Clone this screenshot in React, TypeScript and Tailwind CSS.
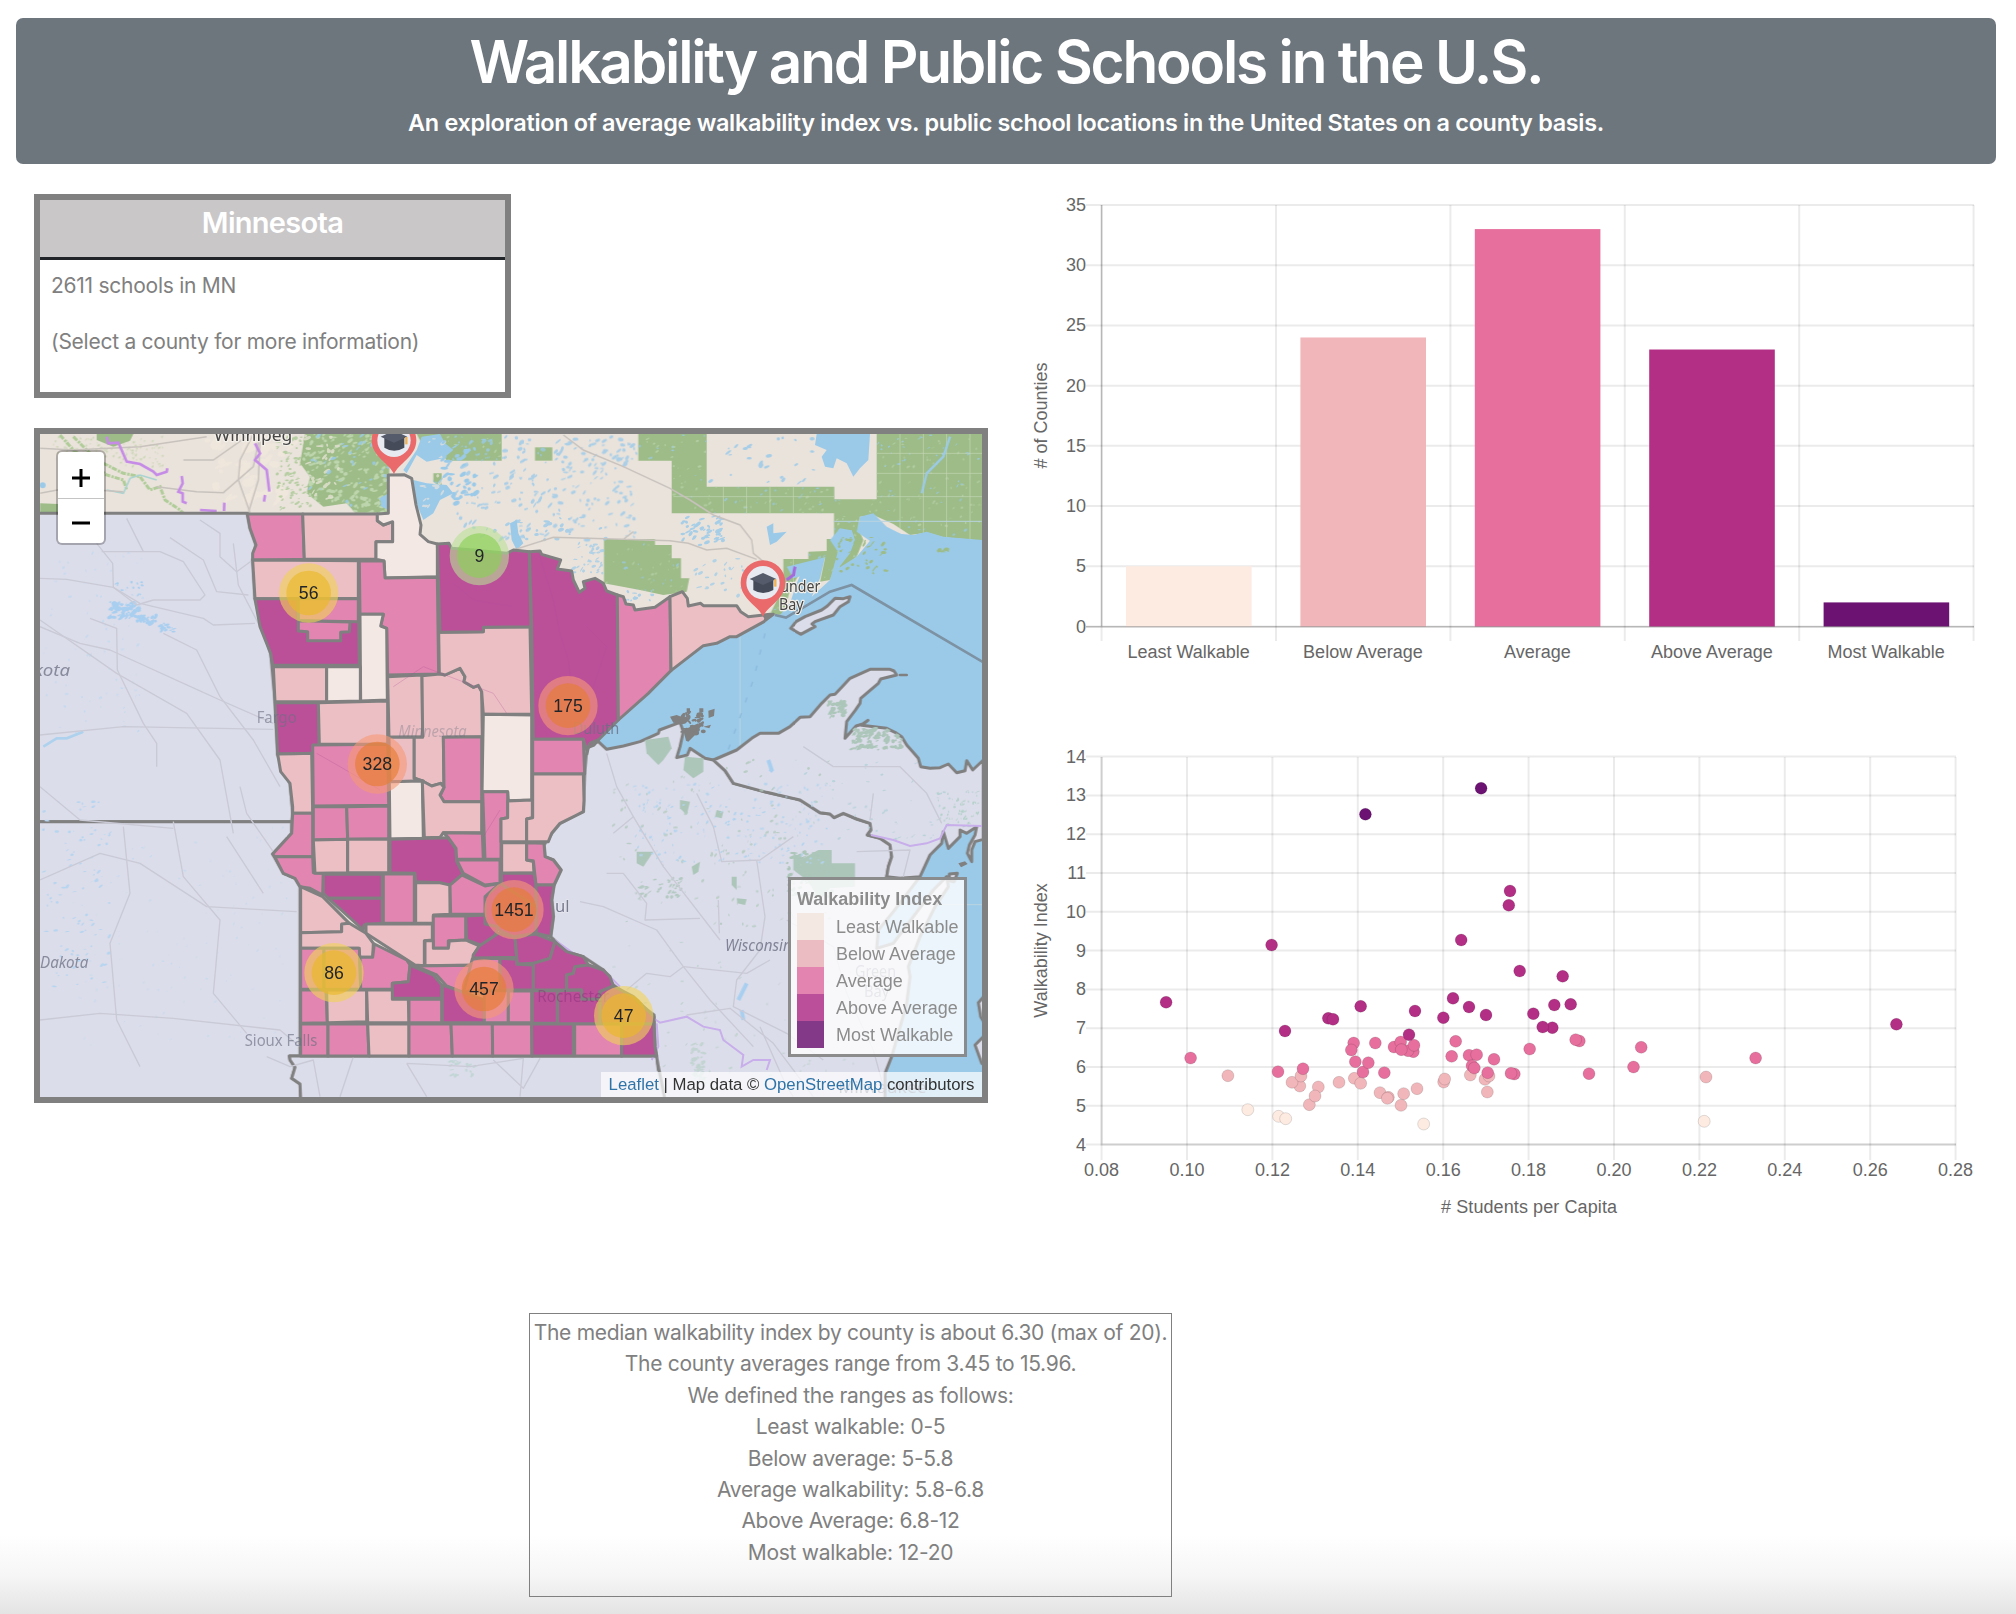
import React from "react";

const SANS = "font-['Liberation_Sans',Arial,sans-serif]";
const SERIES = ["#fdeae1", "#f1b6ba", "#e66f9d", "#b32f85", "#6c1273"];
const AREA: Record<string, string> = { L: "#f4e8e4", B: "#ebbfc4", A: "#e285b0", V: "#bb5099" };

/* ---------- Map data (map units, three per screen pixel) ---------- */

const COUNTIES: [string, string][] = [
  ["A", "22,42 188,42 193,178 38,180 38,160 48,135 30,85"],
  ["B", "188,42 412,42 412,62 430,75 458,65 458,125 408,125 408,178 193,178"],
  ["L", "412,42 445,40 445,-75 492,-76 515,-65 528,15 543,75 540,103 565,125 592,132 592,230 435,234 432,183 408,178 408,125 458,125 458,65 430,75 412,62"],
  ["B", "38,180 355,182 355,296 45,296"],
  ["A", "358,183 432,183 435,234 592,232 596,522 443,525 440,385 422,378 430,343 360,343"],
  ["V", "45,296 355,296 358,496 98,496 92,460 60,380"],
  ["A", "175,296 355,296 355,365 175,362"],
  ["A", "175,362 330,366 328,395 302,397 302,422 203,422 203,395 175,393"],
  ["L", "360,343 430,343 422,378 440,385 442,600 362,603"],
  ["B", "100,500 260,500 260,605 105,605"],
  ["L", "260,500 361,500 361,603 260,605"],
  ["V", "105,608 235,608 238,760 113,762 110,700"],
  ["B", "235,608 443,603 443,733 238,733"],
  ["B", "443,530 546,525 548,710 447,712"],
  ["B", "546,527 600,522 615,525 660,505 675,530 672,545 700,562 715,556 725,575 727,710 610,712 612,856 602,850 575,858 550,845 522,833 522,712 548,712"],
  ["B", "447,712 522,712 522,835 550,843 450,845"],
  ["B", "596,397 730,395 730,382 870,380 875,643 730,643 725,575 715,556 700,562 672,545 675,530 660,505 615,525 598,520"],
  ["V", "592,132 627,130 635,145 700,150 800,160 820,150 868,155 873,380 730,382 730,395 600,397"],
  ["V", "868,155 900,153 905,163 962,180 952,207 995,213 1000,240 1018,277 1035,265 1030,245 1065,235 1090,250 1100,273 1132,285 1135,660 1075,720 1050,730 1040,750 1030,718 880,718 875,380"],
  ["A", "1132,285 1150,290 1158,312 1180,315 1185,330 1245,322 1290,290 1293,512 1225,580 1135,660"],
  ["B", "1290,290 1327,275 1342,295 1345,318 1382,310 1390,317 1490,317 1502,335 1525,350 1590,343 1572,365 1490,410 1470,410 1430,430 1390,437 1293,512"],
  ["A", "878,718 1030,718 1034,822 878,822"],
  ["L", "730,643 875,645 875,900 805,902 803,875 726,875"],
  ["A", "610,712 725,710 725,905 612,905 600,888 612,862"],
  ["A", "218,735 443,733 446,916 220,918"],
  ["B", "113,762 215,760 218,940 158,940 158,920 150,850 122,815"],
  ["A", "158,940 218,940 218,1070 104,1070 98,1062 155,1000"],
  ["A", "104,1070 218,1070 220,1118 250,1120 248,1185 210,1165 180,1160 165,1135 130,1120"],
  ["A", "220,920 320,920 323,1018 220,1020"],
  ["A", "320,920 446,918 446,1016 323,1018"],
  ["L", "448,845 547,843 550,1015 450,1017"],
  ["B", "547,843 575,858 602,850 612,862 600,885 612,905 725,905 725,998 610,998 600,1012 553,1013"],
  ["B", "220,1020 323,1018 323,1118 225,1120"],
  ["B", "323,1018 446,1018 446,1118 323,1118"],
  ["V", "450,1018 625,1013 648,1048 650,1085 668,1120 660,1145 610,1160 600,1148 527,1145 525,1120 450,1118"],
  ["A", "610,998 727,1000 730,1078 650,1078 648,1045 625,1013"],
  ["A", "728,875 803,875 803,953 783,957 783,1078 735,1078"],
  ["B", "803,903 877,900 877,953 860,957 860,1025 783,1025 783,957 803,953"],
  ["B", "878,822 1030,822 1032,900 1030,935 1010,945 960,970 935,1000 925,1025 860,1025 860,957 878,953"],
  ["B", "785,1028 860,1028 860,1080 880,1085 882,1118 785,1120"],
  ["A", "860,1028 912,1030 915,1070 940,1080 963,1110 942,1155 888,1155 880,1082 860,1080"],
  ["A", "650,1080 780,1080 780,1150 735,1155 670,1120"],
  ["V", "250,1123 427,1122 427,1195 265,1195 250,1180"],
  ["V", "265,1195 427,1195 427,1270 372,1275 370,1290"],
  ["A", "430,1122 523,1122 523,1270 430,1270"],
  ["B", "527,1148 600,1148 630,1155 630,1243 580,1245 580,1270 527,1270"],
  ["A", "630,1155 665,1125 735,1158 780,1150 760,1190 735,1243 632,1243"],
  ["V", "785,1120 882,1120 888,1155 888,1220 785,1220"],
  ["V", "888,1155 942,1155 935,1200 940,1250 932,1310 888,1300"],
  ["V", "735,1190 780,1150 888,1220 888,1300 820,1310 735,1272"],
  ["V", "677,1248 735,1245 735,1272 775,1280 760,1320 730,1338 680,1320"],
  ["A", "580,1248 677,1248 677,1320 625,1322 625,1345 580,1345"],
  ["B", "378,1272 577,1272 577,1320 553,1322 553,1397 525,1395 378,1300"],
  ["B", "555,1322 580,1322 580,1345 625,1345 628,1323 677,1320 718,1338 700,1365 697,1395 555,1397"],
  ["A", "525,1398 700,1396 690,1440 670,1478 620,1458 590,1425"],
  ["V", "700,1365 718,1338 775,1300 825,1310 830,1372 700,1374"],
  ["V", "825,1310 888,1302 945,1325 930,1375 880,1390 832,1392"],
  ["B", "182,1160 248,1190 328,1270 305,1275 305,1295 182,1298"],
  ["B", "182,1298 305,1295 305,1272 328,1270 378,1300 400,1330 398,1372 360,1372 355,1345 182,1345"],
  ["A", "182,1345 252,1345 252,1468 182,1468"],
  ["A", "252,1345 358,1345 362,1468 252,1468"],
  ["A", "403,1332 500,1380 510,1395 505,1445 457,1450 457,1468 362,1468 360,1372 398,1372"],
  ["V", "510,1395 580,1425 605,1455 605,1495 457,1495 457,1450 505,1445"],
  ["A", "182,1470 258,1470 262,1568 182,1570"],
  ["B", "260,1470 380,1470 380,1565 262,1568"],
  ["B", "380,1470 457,1470 457,1498 505,1498 507,1568 383,1568"],
  ["A", "507,1498 605,1498 605,1568 507,1568"],
  ["V", "607,1455 680,1480 733,1500 733,1568 607,1568"],
  ["A", "697,1377 780,1375 780,1472 690,1472 670,1478"],
  ["A", "733,1472 805,1472 805,1568 733,1568"],
  ["A", "805,1473 875,1473 875,1568 805,1568"],
  ["V", "780,1375 830,1378 830,1393 880,1395 880,1470 780,1470"],
  ["V", "877,1472 952,1472 952,1570 877,1570"],
  ["V", "880,1390 930,1375 945,1325 980,1355 1030,1370 1045,1395 1005,1400 1000,1420 980,1425 980,1470 880,1470"],
  ["V", "980,1425 1000,1420 1005,1400 1045,1395 1090,1410 1110,1430 1120,1458 1080,1475 1080,1498 1025,1498 1025,1470 980,1470"],
  ["V", "953,1472 1025,1470 1025,1498 1080,1498 1080,1572 953,1572"],
  ["V", "1080,1498 1080,1475 1120,1458 1180,1490 1242,1550 1242,1572 1080,1572"],
  ["A", "182,1572 264,1572 264,1668 182,1668"],
  ["A", "264,1572 383,1572 387,1668 264,1668"],
  ["B", "383,1572 507,1572 507,1668 387,1668"],
  ["A", "507,1572 633,1572 637,1668 507,1668"],
  ["A", "633,1572 757,1572 758,1668 637,1668"],
  ["A", "757,1572 875,1572 876,1668 758,1668"],
  ["V", "875,1572 1000,1572 1000,1668 876,1668"],
  ["A", "1004,1572 1145,1572 1145,1668 1004,1668"],
  ["V", "1145,1572 1242,1572 1245,1640 1250,1668 1145,1668"],
];

const WATER =
  "1075,720 1120,640 1225,545 1293,480 1450,400 1590,345 1620,345 1650,310 1670,250 1690,205 1755,172 1740,235 1715,290 1770,240 1795,150 1812,92 1835,90 1845,120 1830,160 1795,205 1850,170 1900,110 1960,100 2020,105 2060,95 2110,110 2226,120 2226,1795 1050,1795";
const WISCONSIN =
  "1040,750 1050,730 1075,725 1100,748 1150,738 1200,725 1255,700 1258,690 1320,667 1330,695 1320,740 1310,773 1342,765 1350,745 1395,775 1420,780 1455,812 1480,850 1580,877 1680,900 1740,938 1770,942 1782,953 1810,940 1850,957 1890,970 1893,990 1882,1005 1920,1015 1950,1035 1955,1070 1945,1100 1940,1130 1980,1135 2040,1130 1960,1235 1915,1290 1910,1345 1960,1330 2020,1250 2080,1170 2120,1130 2125,1160 2085,1220 2040,1310 2005,1400 2010,1430 2000,1510 1955,1670 1935,1720 1935,1800 1275,1800 1255,1700 1245,1640 1242,1545 1120,1455 1090,1410 1030,1370 980,1355 932,1310 940,1250 935,1200 942,1155 963,1110 940,1080 915,1070 912,1035 935,1000 960,970 1030,935 1034,820";
const UPPER_MICHIGAN =
  "1420,780 1490,750 1535,715 1560,700 1615,700 1650,680 1680,652 1710,650 1745,610 1770,585 1785,583 1830,535 1890,508 1950,508 1962,513 1970,525 1922,537 1915,550 1862,595 1860,610 1845,632 1820,665 1815,715 1848,678 1868,672 1884,661 1865,676 1940,685 1965,697 1985,710 2000,735 2018,755 2035,775 2042,800 2070,805 2100,803 2125,792 2150,818 2175,812 2180,782 2198,810 2230,780 2230,1018 2205,1025 2195,1050 2195,1085 2182,1060 2188,1035 2205,1005 2210,980 2180,1000 2160,990 2160,1010 2125,1045 2110,995 2105,1030 2070,1065 2040,1130 1980,1135 1940,1130 1945,1100 1955,1070 1950,1035 1920,1015 1882,1005 1893,990 1890,970 1850,957 1810,940 1782,953 1770,942 1740,938 1680,900 1580,877 1480,850 1455,812";
const ISLE = "1652,385 1668,365 1695,350 1745,330 1762,318 1785,295 1810,296 1830,290 1825,305 1800,320 1780,345 1725,365 1716,372 1725,380 1682,403";

const FORESTS = [
  "195,-198 450,-198 445,38 345,38 320,10 250,20 200,-20 210,-70 180,-110",
  "530,-198 785,-198 785,-118 620,-118 600,-150 560,-140",
  "885,-158 937,-158 937,-118 885,-118",
  "580,-80 605,-80 605,-35 580,-55",
  "1195,-198 1400,-198 1400,-40 1783,-40 1783,-2 1910,-2 1910,-198 2230,-198 2230,122 2110,112 2060,98 2010,105 1960,72 1900,45 1860,50 1855,85 1870,120 1850,170 1800,215 1795,190 1770,240 1740,245 1755,172 1690,200 1650,270 1630,345 1590,343 1630,260 1630,177 1705,177 1705,155 1760,153 1760,117 1782,117 1782,40 1295,40 1295,-118 1195,-118",
  "1092,117 1245,117 1245,135 1295,135 1295,175 1323,175 1323,235 1348,235 1340,275 1270,285 1200,270 1092,250",
  "-600,10 -545,12 -545,38 -600,38",
  "-430,-198 -320,-198 -330,-178 -380,-160 -430,-180",
];
const US_FORESTS = [
  "1215,720 1285,710 1295,745 1270,780 1255,795 1220,760",
  "1335,770 1390,775 1390,815 1360,835 1330,810",
  "1660,1060 1690,1075 1735,1050 1775,1050 1775,1090 1845,1090 1845,1160 1770,1165 1740,1200 1700,1140 1660,1110",
  "1190,1055 1240,1055 1210,1100 1190,1090",
  "1320,900 1350,905 1340,945 1320,925",
  "1355,1100 1380,1085 1375,1115 1360,1125",
  "1475,1130 1490,1130 1490,1170 1475,1155",
  "1490,1195 1520,1198 1515,1215 1492,1210",
  "1430,930 1450,935 1445,955 1425,950",
];

const ROADS = [
  "M-600,235 L-520,238 L-380,262 L-300,310 L-110,355 L-80,375 L45,370", "M-415,155 L-240,155 L-170,185 L-105,285 L-120,300 L-260,300 L-310,315",
  "M-430,130 L-382,190 L-380,262 L-310,315", "M-340,55 L-290,155", "M-210,113 L-110,180 L-70,275 L25,285", "M-120,60 L-60,100 L-60,170 L-10,215 L38,180",
  "M-20,130 L-5,255 L60,380", "M-600,380 L-480,430 L-390,450 L-60,600 L100,670", "M-600,360 L-370,520 L-160,640 L-60,780 L-20,1000",
  "M-450,355 L-370,385 L-368,510 L-290,670 L-250,730 L-250,800", "M-600,705 L-350,680 L100,688", "M-230,400 L-130,450 L-60,590 L40,720 L120,860",
  "M-600,860 L-480,960 L-200,985", "M-600,1140 L-420,1060 L-300,1090 L-100,1220 L170,1235", "M-350,980 L-330,1180 L-390,1330 L-370,1560 L-300,1700",
  "M-600,1560 L-420,1540 L-200,1555 L120,1590 L180,1640", "M-200,965 L-170,1130 L-60,1260 L-80,1480 L20,1600", "M0,860 L20,940 L110,1070 M-40,1010 L70,1180",
  "M80,1670 L150,1700 L220,1680 L240,1790", "M340,1670 L300,1790", "M500,1690 L690,1700 L850,1675 L840,1790 M500,1690 L560,1790 M760,1680 L850,1765 L900,1675",
  "M1100,760 L1130,860 L1180,950 L1270,1100 L1440,1320", "M1370,880 L1420,980 L1445,1085 L1560,1080 L1660,1010", "M1120,1000 L1180,950 M1100,1120 L1150,1120 L1220,1210 L1215,1260 L1380,1255",
  "M1435,1200 L1438,1300", "M1020,1205 L1090,1220 L1250,1290 L1330,1400 L1410,1500 L1540,1640", "M1160,1470 L1220,1420 L1290,1430 L1330,1400 L1520,1420 L1590,1380",
  "M1550,1080 L1575,1250 L1560,1350 L1490,1440 L1480,1520 L1640,1600 L1750,1680", "M1340,1545 L1470,1525 L1600,1630 L1720,1790", "M1560,1580 L1640,1760 L1660,1790",
  "M1690,740 L1780,800 L1980,800 L2060,880 L2105,970", "M1850,1055 L2010,1050 L1990,1130", "M1900,880 L1890,960", "M1640,1260 L1780,1340 L1820,1480 L1900,1650 L1930,1760",
];
const CANADA_ROADS = [
  "M-600,-155 L-500,-150 L-300,-160 L-100,-190", "M-170,-120 L-80,-120 L20,-190", "M-250,-40 L-130,-25 L-50,-22 L40,-100 L60,-198",
  "M30,38 L-5,-60 L0,-120 L40,-198", "M60,-180 L55,-60 L25,38", "M-600,-20 L-520,-35 L-350,-25",
  "M970,-195 L1030,-150 L1150,-100 L1290,-35 L1350,0 L1420,45 L1500,75 L1535,120 L1540,160 L1570,185",
  "M820,150 L940,112 L1150,118 L1180,95 M1150,118 L1290,122 L1345,130 L1400,150 L1460,145 L1550,178",
];
const PURPLE = [
  "M-400,-190 L-395,-170 L-365,-172 L-340,-115 L-300,-108 L-260,-85 L-250,-75 L-220,-85 L-218,-95",
  "M-175,-72 L-172,-50 L-185,-25 L-172,-20 L-172,5 L-160,10", "M45,-170 L60,-140 L45,-120 L80,-90 L88,-25 M75,-15 L72,5 M-120,30 L-70,33 M-47,8 L-48,33",
];
const US_PURPLE = [
  "M1225,1545 L1260,1568 L1340,1550 L1390,1580 L1440,1590 L1450,1620 L1510,1665 L1505,1700 L1540,1680 L1590,1680 L1580,1710 M1250,1570 L1255,1640 L1235,1680",
  "M1893,1005 L1960,1020 L2010,1038 L2060,1030 L2100,1015 L2120,975 L2226,978",
  "M945,1320 L1000,1360 L1050,1395 L1100,1420 L1140,1460",
];

type Speck = [number, number, number, number, number];
function scatter(seed: number, n: number, x: number, y: number, w: number, h: number, size: number): Speck[] {
  let s = seed * 7919;
  const next = () => {
    s = (s * 16807) % 2147483647;
    return s / 2147483647;
  };
  return Array.from({ length: n }, () => [
    x + next() * w,
    y + next() * h,
    size * (0.3 + next()),
    size * (0.2 + next() * 0.5),
    next() * 70 - 60,
  ]);
}
function Specks({ items, fill, opacity = 1 }: { items: Speck[]; fill: string; opacity?: number }) {
  return (
    <g fill={fill} opacity={opacity}>
      {items.map(([x, y, rx, ry, a], i) => (
        <ellipse key={i} cx={x} cy={y} rx={rx} ry={ry} transform={`rotate(${a} ${x} ${y})`} />
      ))}
    </g>
  );
}

function Pin({ x, y }: { x: number; y: number }) {
  return (
    <g transform={`translate(${x} ${y})`}>
      <path d="M0,102 C-12,70 -67,50 -67,0 A67,67 0 1 1 67,0 C67,50 12,70 0,102Z" fill="#ea696b" />
      <circle r="50" fill="#e7eaf1" />
      <path d="M-29,-8 V22 Q0,40 31,22 V-8Z" fill="#464b5a" />
      <path d="M-40,-11 L0,-29 L40,-11 L0,7Z" fill="#555b6a" />
      <path d="M37,-10 V12" stroke="#f2b04e" strokeWidth="7" />
    </g>
  );
}

const YELLOW = ["#f1d357", "#eab92a"];
const ORANGE = ["#f79a76", "#e67d36"];
const CLUSTERS: [number, number, string, string[]][] = [
  [206, 279, "56", YELLOW],
  [718, 167, "9", ["#b9e096", "#8bcf57"]],
  [984, 617, "175", ORANGE],
  [412, 792, "328", ORANGE],
  [822, 1229, "1451", ORANGE],
  [282, 1418, "86", YELLOW],
  [732, 1467, "457", ORANGE],
  [1151, 1547, "47", YELLOW],
];

const PLACES: [number, number, string, number, boolean, number][] = [
  [-688, 527, "Dakota", 178, true, 0.75],
  [-600, 1405, "Dakota", 145, true, 0.75],
  [50, 670, "Fargo", 120, false, 0.6],
  [475, 710, "Minnesota", 205, true, 0.35],
  [998, 703, "Duluth", 140, false, 0.8],
  [14, 1638, "Sioux Falls", 218, false, 0.65],
  [1455, 1352, "Wisconsin", 200, true, 0.8],
  [1845, 1432, "Green", 123, false, 0.75],
  [1872, 1490, "Bay", 76, false, 0.75],
  [1795, 1778, "Milwaukee", 265, false, 0.85],
];

function MapCanvas() {
  return (
    <svg viewBox="-600 -198 2826 1989" className="block h-full w-full" preserveAspectRatio="none">
      <defs>
        <clipPath id="forest">
          {FORESTS.map((p) => <polygon key={p} points={p} />)}
        </clipPath>
        <clipPath id="wi">
          <polygon points={WISCONSIN} />
          <polygon points={UPPER_MICHIGAN} />
        </clipPath>
      </defs>
      <rect x="-600" y="-198" width="2826" height="1989" fill="#eae3dc" />
      <Specks items={scatter(7, 40, -100, -190, 260, 210, 22)} fill="#f0e8dc" opacity={0.8} />
      <Specks items={scatter(17, 150, -560, -190, 330, 90, 4)} fill="#b9cf9f" opacity={0.7} />
      <Specks items={scatter(23, 110, 110, -190, 110, 220, 6)} fill="#a9c894" opacity={0.8} />
      <g fill="none" stroke="#b0cc98">
        <path d="M-540,-195 L-500,-150 L-460,-120 L-400,-75 L-350,-60 L-340,-30 M-500,-190 L-430,-120 L-350,-80 L-300,-70 L-270,-30 L-240,-40 L-225,0 L-180,30 L-150,60" strokeWidth="9" strokeDasharray="16 4 7 3" />
        <path d="M-190,50 L-150,66" strokeWidth="10" />
      </g>
      <path d="M-400,-30 L-350,-20 L-330,-65 L-300,-75 L-250,-60" fill="none" stroke="#a9d3d0" strokeWidth="5" />
      <circle cx="-592" cy="-44" r="9" fill="#9bcae9" />
      {FORESTS.map((p) => <polygon key={p} points={p} fill="#9dbc87" />)}
      <g clipPath="url(#forest)">
        <Specks items={scatter(31, 200, 190, -198, 260, 240, 8)} fill="#c6dcb8" opacity={0.8} />
        <Specks items={scatter(37, 40, 190, -198, 110, 240, 9)} fill="#e4e2d3" opacity={0.8} />
        <Specks items={scatter(41, 700, 520, -198, 1700, 540, 5)} fill="#b8d2aa" opacity={0.8} />
        <Specks items={scatter(43, 520, 520, -198, 1700, 540, 5)} fill="#9bcae9" opacity={0.8} />
        <Specks items={scatter(47, 40, 190, -198, 260, 240, 8)} fill="#9bcae9" opacity={0.85} />
        <path d="M1450,-198V340 M1520,-198V340 M1590,-198V340 M1660,-198V340 M1980,-198V120 M2050,-198V120 M2120,-198V120 M2190,-198V120 M1300,-10H2226 M1900,-80H2226 M1900,-140H2226" stroke="#c5d8b7" strokeWidth="2" />
      </g>
      <g fill="#9bcae9">
        <polygon points={WATER} />
        <path d="M1730,-198 L1890,-198 L1885,-120 L1860,-95 L1840,-70 L1820,-110 L1790,-125 L1780,-95 L1755,-100 L1745,-130 L1760,-150 L1725,-165Z" />
        <path d="M545,-190 L600,-198 L615,-170 L640,-150 L610,-125 L560,-115 L530,-135 L500,-80 L520,-60 L560,-50 L620,-45 L640,-20 L600,0 L580,40 L550,60 L525,0 L520,-50 L505,-75 L490,-90 L530,-150Z" />
        <path d="M420,-5 L445,-20 L445,30 L425,20Z" />
        <path d="M810,70 L830,60 L835,100 L850,130 L830,150 L815,120Z" />
        <path d="M1580,80 L1600,70 L1600,100 L1640,95 L1610,125 L1590,135Z" />
      </g>
      <Specks items={scatter(72, 30, 540, -190, 100, 230, 8)} fill="#eae3dc" opacity={0.7} />
      <Specks items={scatter(71, 270, 640, -190, 550, 310, 8)} fill="#9bcae9" opacity={0.8} />
      <Specks items={scatter(73, 40, 600, -180, 110, 200, 10)} fill="#9bcae9" />
      <Specks items={scatter(79, 50, 1320, 50, 130, 90, 8)} fill="#9bcae9" opacity={0.85} />
      <Specks items={scatter(83, 30, 1350, 170, 190, 120, 7)} fill="#9bcae9" opacity={0.7} />
      <Specks items={scatter(89, 26, 1410, -190, 330, 140, 8)} fill="#9bcae9" opacity={0.85} />
      <Specks items={scatter(97, 36, 1000, 130, 90, 90, 7)} fill="#9bcae9" opacity={0.7} />
      <Specks items={scatter(99, 14, 1150, 270, 100, 40, 7)} fill="#9bcae9" opacity={0.8} />
      <path d="M2130,-190 L2110,-130 L2060,-80 L2045,-20" fill="none" stroke="#9bcae9" strokeWidth="7" />
      <path d="M1860,50 L1900,40 L1940,80 L2000,110 L1900,130 L1850,95Z M1770,120 L1800,85 L1830,90 L1840,130 L1815,165 L1790,150Z M1640,200 L1755,172 L1725,215 L1660,235Z" fill="#9bcae9" />
      <Specks items={scatter(101, 40, 1790, 110, 150, 110, 7)} fill="#9dbc87" />
      <Specks items={scatter(103, 5, 2090, 145, 50, 10, 8)} fill="#9dbc87" />
      {CANADA_ROADS.map((d) => <path key={d} d={d} fill="none" stroke="#c8c2bd" strokeWidth="4.5" />)}
      {PURPLE.map((d) => <path key={d} d={d} fill="none" stroke="#c58be6" strokeWidth="8" />)}
      <path d="M1640,240 L1660,225 L1665,200" fill="none" stroke="#a668dc" strokeWidth="9" />
      <path d="M1500,410 V740 M2226,1214 H1980 M1782,64 H2226" stroke="#b9d3df" strokeWidth="3" />
      <path d="M1575,400 L1540,540 L1450,790" fill="none" stroke="#8bbadb" strokeWidth="4" strokeDasharray="16 34" />

      {/* neighbouring states */}
      <g fill="#dcddea" stroke="#808080" strokeWidth="9" strokeLinejoin="round">
        <polygon points="-620,40 22,40 30,85 48,135 38,180 45,296 92,460 105,605 113,765 150,850 158,940 155,965 -620,965" />
        <polygon points="-620,965 155,965 155,1000 98,1062 130,1120 165,1135 180,1160 180,1668 148,1668 150,1680 165,1702 155,1735 180,1752 182,1800 -620,1800" />
        <polygon points="148,1668 1250,1668 1255,1710 1275,1718 1300,1800 182,1800 180,1752 155,1735 165,1702 150,1680" />
        <polygon points={WISCONSIN} />
        <polygon points={UPPER_MICHIGAN} />
        <polygon points={ISLE} />
        <polygon points="2240,1480 2215,1508 2222,1550 2240,1580" />
        <polygon points="2240,1600 2205,1635 2225,1690 2240,1700" />
        <polygon points="2128,1122 2152,1120 2142,1145 2128,1142" />
      </g>
      <g clipPath="url(#wi)">
        {US_FORESTS.map((p) => <polygon key={p} points={p} fill="#acc6ba" />)}
        <Specks items={scatter(107, 90, 1835, 685, 150, 65, 9)} fill="#acc6ba" />
        <Specks items={scatter(109, 36, 1765, 600, 55, 50, 9)} fill="#acc6ba" />
        <Specks items={scatter(111, 60, 1640, 1050, 150, 140, 8)} fill="#acc6ba" />
        <Specks items={scatter(112, 40, 1200, 1135, 130, 60, 7)} fill="#acc6ba" opacity={0.8} />
        <Specks items={scatter(113, 120, 1120, 780, 650, 500, 6)} fill="#b1cabd" opacity={0.8} />
        <Specks items={scatter(127, 200, 1180, 850, 580, 240, 5)} fill="#b3d4ee" />
        <Specks items={scatter(131, 80, 1040, 1300, 800, 460, 5)} fill="#b9d0c8" opacity={0.7} />
        <Specks items={scatter(133, 40, 1355, 1630, 40, 120, 8)} fill="#b9d0c8" opacity={0.7} />
        <Specks items={scatter(137, 60, 1600, 780, 600, 240, 5)} fill="#b9d3dc" />
        <Specks items={scatter(138, 60, 2090, 870, 130, 110, 5)} fill="#b3d0c8" />
        <path d="M1585,780 L1595,810 L1590,815 M1520,1450 L1495,1500 M1505,1530 L1510,1560" stroke="#a9cff0" strokeWidth="12" fill="none" />
      </g>
      <Specks items={scatter(139, 90, -590, 900, 200, 560, 6)} fill="#b6d5f0" />
      <Specks items={scatter(149, 75, -392, 305, 90, 50, 8)} fill="#a9cff0" />
      <Specks items={scatter(150, 24, -310, 345, 60, 25, 9)} fill="#a9cff0" />
      <Specks items={scatter(151, 18, -240, 370, 45, 25, 7)} fill="#a9cff0" />
      <Specks items={scatter(152, 16, -380, 245, 100, 40, 6)} fill="#a9cff0" />
      <Specks items={scatter(157, 80, -590, 150, 300, 560, 5)} fill="#bfd9f0" opacity={0.8} />
      <Specks items={scatter(163, 120, -500, 980, 640, 660, 4)} fill="#c3daee" opacity={0.8} />
      <Specks items={scatter(167, 24, 630, 1680, 80, 50, 7)} fill="#bdd5d2" opacity={0.8} />
      <path d="M-590,740 L-550,715 L-520,715 L-470,695" fill="none" stroke="#aed2ee" strokeWidth="8" />
      <g fill="none" stroke="#c9cad6" strokeWidth="4" strokeLinejoin="round">
        {ROADS.map((d) => <path key={d} d={d} />)}
      </g>
      {US_PURPLE.map((d) => <path key={d} d={d} fill="none" stroke="#c8aeea" strokeWidth="6" />)}

      {/* Apostle Islands */}
      <g fill="#808080">
        <Specks items={scatter(181, 36, 1325, 640, 65, 60, 10)} fill="#808080" />
        <path d="M1290,650 L1310,645 L1335,655 L1330,672 L1300,668Z M1405,632 L1424,626 L1422,648 L1406,654Z M1330,690 L1375,670 L1380,690 L1345,725 L1338,722Z M1390,680 L1413,674 L1408,685Z" />
        <path d="M1340,625 h10 v14 h-10z M1378,625 h12 v12 h-12z M2155,1090 l20,-6 l8,8 l-20,10z" />
      </g>
      <path d="M1605,345 L1638,353 L1770,275 L1835,255 L2230,487" fill="none" stroke="#7d92a2" strokeWidth="8" />
      <path d="M1980,525 H2000" stroke="#808080" strokeWidth="8" strokeLinecap="round" />

      {/* counties */}
      <g stroke="#808080" strokeWidth="9" strokeLinejoin="round">
        {COUNTIES.map(([c, p]) => <polygon key={p} points={p} fill={AREA[c]} />)}
        <path d="M1050,730 L1075,720 L1062,735 L1045,742 L1040,765" fill="#bb5099" />
        <path d="M1570,348 L1600,343 L1575,362" fill="#808080" />
      </g>
      <g fill="none" stroke="#b04d96" strokeWidth="3" opacity="0.28">
        <path d="M900,170 L940,300 L960,400 L985,480 L1000,600 M1040,380 L1100,440 L1060,560 M640,250 L700,300 L820,320" />
        <path d="M460,560 L550,500 L760,580 L800,640 M230,760 L300,800 L420,870 M730,1010 L780,930" />
      </g>

      {/* place names */}
      <g fontFamily="Noto Sans" fontSize="50" fill="#6b6f82" strokeWidth="5" paintOrder="stroke" strokeLinejoin="round">
        {PLACES.map(([x, y, t, w, it, o], i) => (
          <text key={i} x={x} y={y} textLength={w} lengthAdjust="spacingAndGlyphs" fontStyle={it ? "italic" : "normal"} opacity={o}>{t}</text>
        ))}
        <text x={892} y={1505} fill="#8f2f7c" opacity=".5" textLength="215" lengthAdjust="spacingAndGlyphs">Rochester</text>
        <text x={945} y={1235} fill="#777b8e" stroke="#e7e7f0">ul</text>
        <g fill="#444" stroke="#f4f0ea" strokeWidth="7">
          <text x={-78} y={-178} textLength="235" lengthAdjust="spacingAndGlyphs">Winnipeg</text>
          <text x={1571} y={275} textLength="170" lengthAdjust="spacingAndGlyphs">Thunder</text>
          <text x={1617} y={331} textLength="74" lengthAdjust="spacingAndGlyphs">Bay</text>
        </g>
      </g>

      <Pin x={462} y={-179} />
      <Pin x={1569} y={248} />

      {CLUSTERS.map(([x, y, n, [outer, inner]]) => (
        <g key={n}>
          <circle cx={x} cy={y} r="89" fill={outer} fillOpacity=".6" />
          <circle cx={x} cy={y} r="67" fill={inner} fillOpacity=".65" />
          <text x={x} y={y + 19} textAnchor="middle" fontFamily="Liberation Sans" fontSize="53" fill="#212529">{n}</text>
        </g>
      ))}
    </svg>
  );
}

const LEGEND: [string, string][] = [
  ["Least Walkable", "bg-[#f4e8e2]"],
  ["Below Average", "bg-[#ebbdc3]"],
  ["Average", "bg-[#e383af]"],
  ["Above Average", "bg-[#bb4f99]"],
  ["Most Walkable", "bg-[#833987]"],
];

function MapPanel() {
  return (
    <div className={`relative mt-[30px] h-[675px] w-[954px] overflow-hidden border-6 border-[#808080] ${SANS}`}>
      <MapCanvas />
      <div className="absolute left-[16px] top-[16px] flex h-[95px] w-[50px] flex-col rounded-[6px] border-[2.5px] border-black/25 bg-white bg-clip-padding">
        <div className="flex flex-1 items-center justify-center border-b border-[#c4c4c4] pt-[6px]">
          <svg viewBox="0 0 18 18" className="h-[18px] w-[18px]"><path d="M0 9h18M9 0v18" stroke="#000" strokeWidth="3" /></svg>
        </div>
        <div className="flex flex-1 items-center justify-center pt-[4px]">
          <svg viewBox="0 0 18 18" className="h-[18px] w-[18px]"><path d="M0 9h18" stroke="#000" strokeWidth="3" /></svg>
        </div>
      </div>
      <div className="absolute left-[748px] top-[443px] h-[180px] w-[179px] border-3 border-[#808080]/90 bg-white/80 pl-[6px] pt-[5px] text-[18px] text-[#8c8c8c]">
        <div className="whitespace-nowrap pt-[1px] font-bold leading-[27px]">Walkability Index</div>
        {LEGEND.map(([label, bg]) => (
          <div key={label} className="flex h-[27px] items-center">
            <span className={`h-[27px] w-[27px] ${bg}`} />
            <span className="ml-[12px] whitespace-nowrap pt-[2px] leading-[27px]">{label}</span>
          </div>
        ))}
      </div>
      <div className="absolute bottom-0 right-0 flex h-[25px] w-[381px] items-center justify-center whitespace-pre bg-white/70 text-[16.75px] text-[#333]">
        <span className="text-[#2f74a8]">Leaflet</span> | Map data © <span className="text-[#2f74a8]">OpenStreetMap</span> contributors
      </div>
    </div>
  );
}

/* ---------- Charts ---------- */

const BARS: [string, number][] = [
  ["Least Walkable", 5],
  ["Below Average", 24],
  ["Average", 33],
  ["Above Average", 23],
  ["Most Walkable", 2],
];

function BarChart() {
  const y = (v: number) => 626.5 - (v * 421.5) / 35;
  return (
    <svg viewBox="1028 184 968 500" className="block h-[500px] w-[968px]" fontFamily="Liberation Sans" fontSize="18" fill="#666">
      <g stroke="#000" strokeOpacity=".08" strokeWidth="2">
        {[0, 5, 10, 15, 20, 25, 30, 35].map((v) => <path key={v} d={`M1086 ${y(v)}H1974`} />)}
        {[0, 1, 2, 3, 4, 5].map((i) => <path key={i} d={`M${1101.6 + i * 174.4} 205V641`} />)}
      </g>
      {BARS.map(([label, v], i) => (
        <g key={label}>
          <rect x={1126 + i * 174.4} y={y(v)} width="125.6" height={626.5 - y(v)} fill={SERIES[i]} />
          <text x={1188.6 + i * 174.4} y="658" textAnchor="middle">{label}</text>
        </g>
      ))}
      <path d="M1101.6 205V627M1086 626.8H1974" stroke="#000" strokeOpacity=".22" strokeWidth="1.5" />
      {[0, 5, 10, 15, 20, 25, 30, 35].map((v) => <text key={v} x="1086" y={y(v) + 6} textAnchor="end">{v}</text>)}
      <text transform="translate(1047 415.5) rotate(-90)" textAnchor="middle"># of Counties</text>
    </svg>
  );
}

const OUTLIERS: [number, number, number][] = [
  [1247.8, 1109.7, 0], [1278.6, 1116.3, 0], [1285.7, 1118.7, 0], [1704.2, 1121.3, 0],
  [1227.9, 1075.7, 1], [1299.8, 1086, 1], [1292, 1082.3, 1], [1301, 1076, 1], [1706, 1077, 1],
  [1190.6, 1058, 2], [1278, 1071.7, 2], [1303, 1068.7, 2], [1641.2, 1047.3, 2], [1633.5, 1067, 2], [1755.6, 1058, 2],
  [1510, 891, 3], [1508.8, 905.3, 3], [1461.2, 940, 3], [1271.6, 945, 3], [1166.1, 1002.3, 3], [1285, 1031, 3], [1896.4, 1024.3, 3],
  [1481.1, 788.3, 4], [1365.4, 814.3, 4],
];
/* the crowded middle of the plot, in thirds of a pixel */
const CROWD: [number, number[][]][] = [
  [0, [[371, 492]]],
  [1, [[55, 381], [28, 434], [45, 408], [117, 367], [163, 355], [182, 370], [240, 398], [265, 412], [262, 415], [311, 401], [351, 386], [303, 436], [431, 366], [434, 357], [511, 345], [555, 358], [567, 348], [562, 396]]],
  [2, [[161, 249], [154, 270], [226, 249], [282, 261], [302, 246], [340, 275], [324, 272], [304, 269], [342, 256], [467, 244], [455, 289], [507, 286], [530, 284], [582, 298], [516, 317], [523, 324], [563, 338], [643, 342], [633, 340], [689, 267], [838, 243], [827, 239], [867, 341], [166, 305], [189, 336], [205, 308], [253, 338]]],
  [3, [[659, 33], [788, 49], [182, 139], [459, 115], [507, 141], [345, 153], [430, 173], [558, 165], [763, 135], [812, 133], [700, 161], [757, 203], [728, 201], [85, 175], [99, 178], [327, 224]]],
];

function ScatterChart() {
  const ys = [4, 5, 6, 7, 8, 9, 10, 11, 12, 13, 14];
  const y = (v: number) => 1144.6 - (v - 4) * 38.8;
  return (
    <svg viewBox="1028 736 968 500" className="mt-[52px] block h-[500px] w-[968px]" fontFamily="Liberation Sans" fontSize="18" fill="#666">
      <g stroke="#000" strokeOpacity=".08" strokeWidth="2">
        {ys.map((v) => <path key={v} d={`M1086 ${y(v)}H1956`} />)}
        {ys.map((v, i) => <path key={v} d={`M${1101.6 + i * 85.4} 757V1160`} />)}
      </g>
      <path d="M1101.6 757V1144.6H1956" fill="none" stroke="#000" strokeOpacity=".12" strokeWidth="2" />
      {ys.map((v, i) => (
        <g key={v}>
          <text x="1086" y={y(v) + 6} textAnchor="end">{v}</text>
          <text x={1101.6 + i * 85.4} y="1176" textAnchor="middle">{(0.08 + i * 0.02).toFixed(2)}</text>
        </g>
      ))}
      <g stroke="#000" strokeOpacity=".12">
        {OUTLIERS.map(([x, py, c], i) => <circle key={i} cx={x} cy={py} r="6" fill={SERIES[c]} />)}
        {CROWD.map(([c, pts]) => pts.map(([u, v]) => (
          <circle key={`${u}-${v}`} cx={1300 + u / 3} cy={960 + v / 3} r="6" fill={SERIES[c]} />
        )))}
      </g>
      <text x="1529" y="1212.5" textAnchor="middle" textLength="176"># Students per Capita</text>
      <text transform="translate(1047 950.5) rotate(-90)" textAnchor="middle">Walkability Index</text>
    </svg>
  );
}

const NOTES = [
  "The median walkability index by county is about 6.30 (max of 20).",
  "The county averages range from 3.45 to 15.96.",
  "We defined the ranges as follows:",
  "Least walkable: 0-5",
  "Below average: 5-5.8",
  "Average walkability: 5.8-6.8",
  "Above Average: 6.8-12",
  "Most walkable: 12-20",
];

export default function App() {
  return (
    <div className="h-[1614px] w-[2016px] overflow-hidden bg-[linear-gradient(to_bottom,#fff_1535px,#f6f6f6_1575px,#e4e4e4_1614px)] pt-[18px] font-['Inter',sans-serif] text-[#808080]">
      <header className="ml-[16px] h-[146px] w-[1980px] rounded-[7px] bg-[#6d757d] pt-[8px] text-center text-white">
        <h1 className="text-[58.5px] font-semibold leading-[72px] tracking-[-2.2px]">Walkability and Public Schools in the U.S.</h1>
        <p className="mt-[10px] text-[23.4px] font-semibold leading-[30px] tracking-[-0.3px]">An exploration of average walkability index vs. public school locations in the United States on a county basis.</p>
      </header>
      <main className="mt-[20px] flex">
        <section className="ml-[34px] mt-[10px] w-[994px]">
          <div className="h-[204px] w-[477px] border-6 border-[#808080] bg-white text-[21px] tracking-[-0.26px]">
            <div className="h-[60px] border-b-3 border-[#212529] bg-[#c9c7c8] pt-[4px] text-center text-[29px] font-semibold leading-[38px] tracking-[-0.7px] text-white">Minnesota</div>
            <p className="pl-[11px] pt-[12px] leading-[28px]">2611 schools in MN</p>
            <p className="pl-[11px] pt-[28px] leading-[28px]">(Select a county for more information)</p>
          </div>
          <MapPanel />
        </section>
        <section className="w-[968px]">
          <BarChart />
          <ScatterChart />
        </section>
      </main>
      <footer className="ml-[529px] mt-[77px] h-[284px] w-[643px] border-[1.5px] border-[#808080] pt-[3px] text-center text-[21px] tracking-[-0.3px]">
        {NOTES.map((line) => <p key={line} className="whitespace-nowrap leading-[31.4px]">{line}</p>)}
      </footer>
    </div>
  );
}
